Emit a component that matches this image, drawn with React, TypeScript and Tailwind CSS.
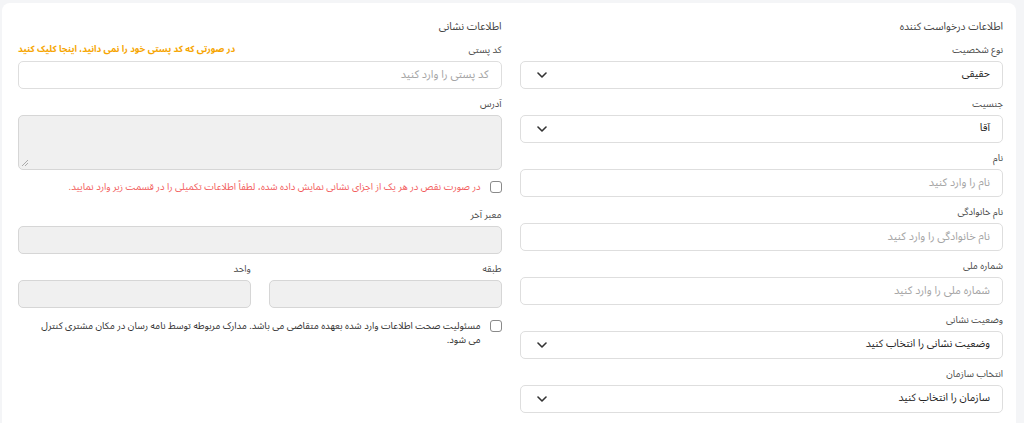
import React from "react";

const font = { fontFamily: '"Noto Sans Arabic", "DejaVu Sans", "Noto Sans", sans-serif' };

function Chevron() {
    return (
        <svg width="10" height="6" viewBox="0 0 10 6" fill="none" className="shrink-0">
            <path d="M1 1l4 4 4-4" stroke="#333" strokeWidth="1.6" strokeLinecap="round" strokeLinejoin="round" />
        </svg>
    );
}

function Label({ children }: { children: React.ReactNode }) {
    return <div className="h-[14px] leading-[14px] text-[9.5px] text-[#4a4a4a] mb-[4px]">{children}</div>;
}

function TextField({ label, placeholder }: { label: string; placeholder: string }) {
    return (
        <div>
            <Label>{label}</Label>
            <div className="h-[28px] rounded-[5px] border border-[#dedede] bg-white flex items-center pr-[12px] text-[11px] text-[#a5a5a5]">
                {placeholder}
            </div>
        </div>
    );
}

function SelectField({ label, value }: { label: string; value: string }) {
    return (
        <div>
            <Label>{label}</Label>
            <div className="h-[28px] rounded-[5px] border border-[#dedede] bg-white flex items-center justify-between pr-[12px] pl-[16px] text-[10.5px] text-[#222]">
                <span>{value}</span>
                <Chevron />
            </div>
        </div>
    );
}

function GrayField({ label }: { label: string }) {
    return (
        <div>
            <Label>{label}</Label>
            <div className="h-[28px] rounded-[5px] border border-[#d6d6d6] bg-[#f0f0f0]" />
        </div>
    );
}

function Check({ children, tone }: { children: React.ReactNode; tone: string }) {
    return (
        <div className="flex items-start gap-[9px]">
            <span className="mt-[1px] w-[12px] h-[12px] shrink-0 rounded-[3px] border border-[#8a8a8a] bg-white" />
            <p className={`text-[9.6px] leading-[14px] max-w-[445px] ${tone}`}>{children}</p>
        </div>
    );
}

export default function App() {
    return (
        <div className="min-h-screen bg-[#f4f5f7] pt-[3px] pr-[8px] pl-[2px]" style={font}>
            <div dir="rtl" className="bg-white rounded-[8px] pt-[16px] pr-[13px] pl-[16px] pb-[20px] grid grid-cols-2 gap-[18px]">
                {/* applicant */}
                <div className="flex flex-col gap-[8px]">
                    <div className="h-[16px] leading-[16px] text-[10.5px] text-[#444]">اطلاعات درخواست کننده</div>
                    <SelectField label="نوع شخصیت" value="حقیقی" />
                    <SelectField label="جنسیت" value="آقا" />
                    <TextField label="نام" placeholder="نام را وارد کنید" />
                    <TextField label="نام خانوادگی" placeholder="نام خانوادگی را وارد کنید" />
                    <TextField label="شماره ملی" placeholder="شماره ملی را وارد کنید" />
                    <SelectField label="وضعیت نشانی" value="وضعیت نشانی را انتخاب کنید" />
                    <SelectField label="انتخاب سازمان" value="سازمان را انتخاب کنید" />
                </div>

                {/* address */}
                <div className="flex flex-col">
                    <div className="h-[16px] leading-[16px] text-[10.5px] text-[#444] mb-[8px]">اطلاعات نشانی</div>
                    <div className="flex items-center justify-between h-[14px] mb-[4px]">
                        <span className="text-[9.5px] text-[#4a4a4a]">کد پستی</span>
                        <span className="text-[9.1px] font-bold text-[#f6a500] cursor-pointer">در صورتی که کد پستی خود را نمی دانید، اینجا کلیک کنید</span>
                    </div>
                    <div className="h-[28px] rounded-[5px] border border-[#dedede] bg-white flex items-center pr-[12px] text-[11px] text-[#a5a5a5]">
                        کد پستی را وارد کنید
                    </div>
                    <div className="mt-[8px]">
                        <Label>آدرس</Label>
                        <div className="relative h-[55px] rounded-[5px] border border-[#d6d6d6] bg-[#f0f0f0]">
                            <svg width="8" height="8" viewBox="0 0 8 8" className="absolute left-[2px] bottom-[2px]">
                                <path d="M1 7L7 1M4 7L7 4" stroke="#999" strokeWidth="0.8" />
                            </svg>
                        </div>
                    </div>
                    <div className="mt-[10px]">
                        <Check tone="text-[#f25c5c]">در صورت نقص در هر یک از اجزای نشانی نمایش داده شده، لطفاً اطلاعات تکمیلی را در قسمت زیر وارد نمایید.</Check>
                    </div>
                    <div className="mt-[14px]">
                        <GrayField label="معبر آخر" />
                    </div>
                    <div className="mt-[8px] grid grid-cols-2 gap-[18px]">
                        <GrayField label="طبقه" />
                        <GrayField label="واحد" />
                    </div>
                    <div className="mt-[11px]">
                        <Check tone="text-[#333]">مسئولیت صحت اطلاعات وارد شده بعهده متقاضی می باشد. مدارک مربوطه توسط نامه رسان در مکان مشتری کنترل می شود.</Check>
                    </div>
                </div>
            </div>
        </div>
    );
}
